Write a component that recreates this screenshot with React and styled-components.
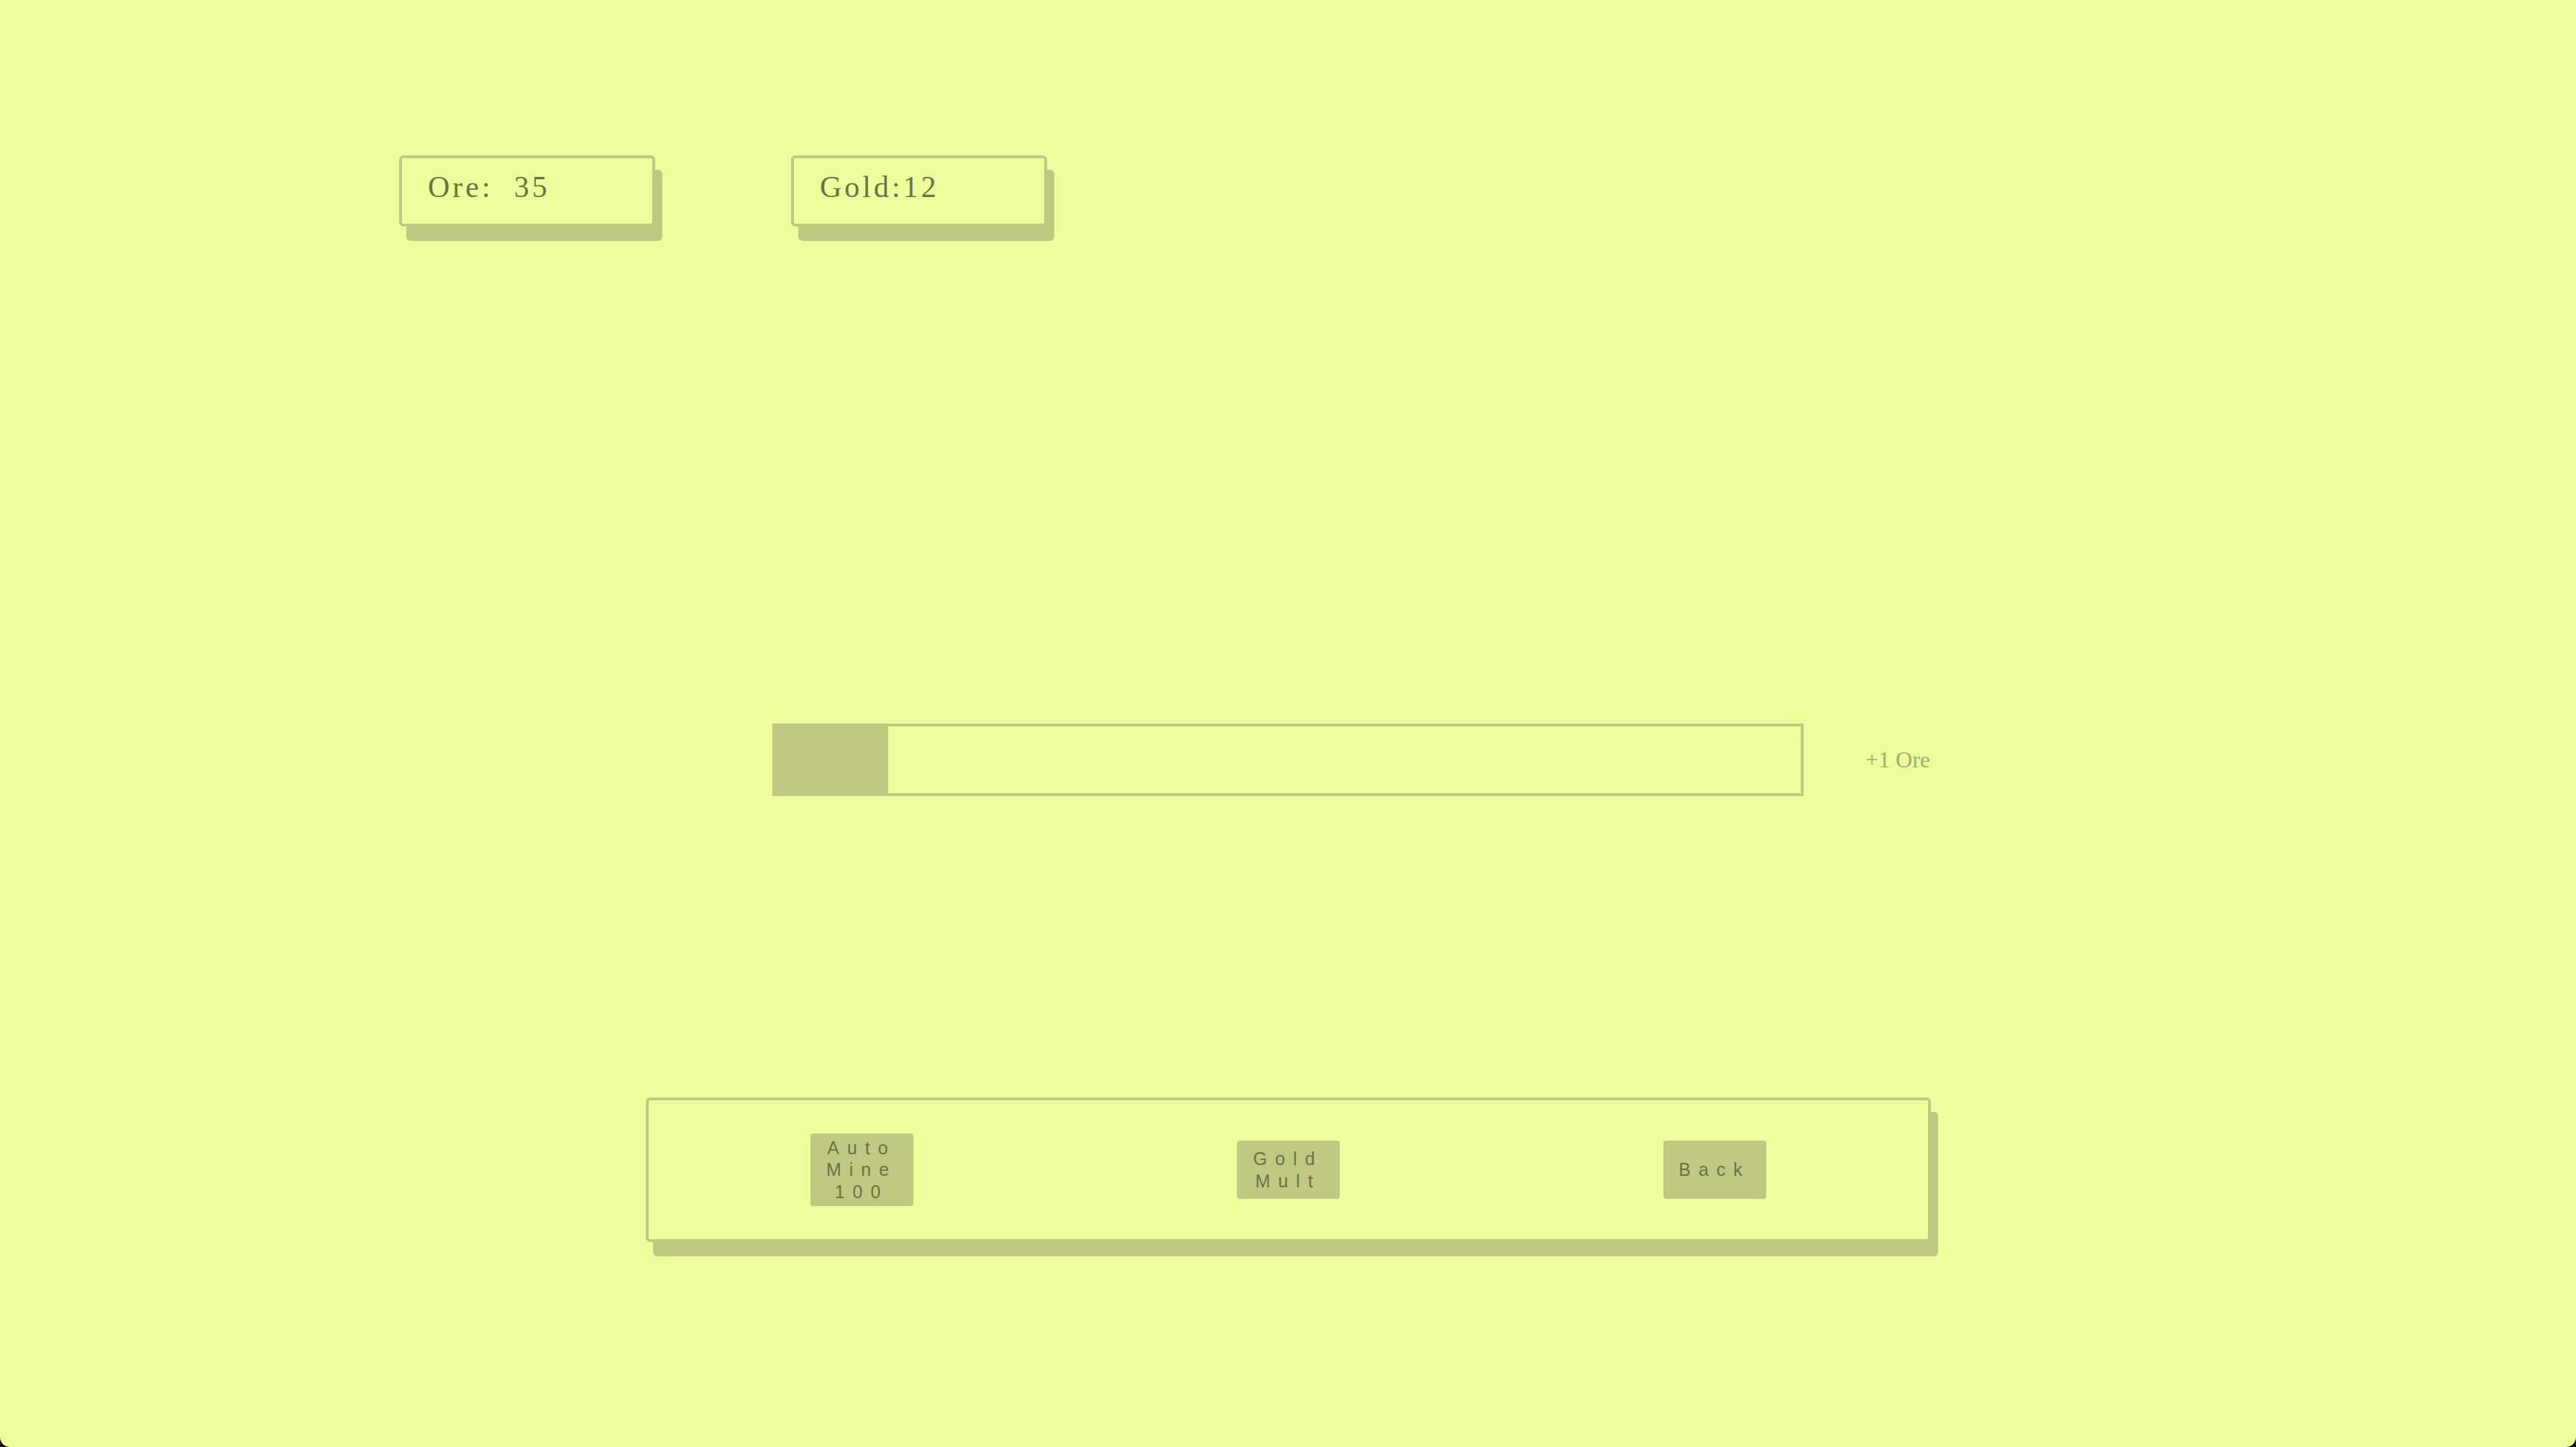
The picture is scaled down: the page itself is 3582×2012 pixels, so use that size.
import React from "react";
import styled, { createGlobalStyle } from "styled-components";

const GlobalStyle = createGlobalStyle`
  html, body {
    margin: 0;
    padding: 0;
    background: #1b0f1b;
  }
  * {
    box-sizing: border-box;
  }
`;

const upgrades = [
  { id: "auto", label: "Auto Mine 100" },
  { id: "mult", label: "Gold Mult" },
  { id: "back", label: "Back" },
];

const App = () => {
  const ore = 35;
  const gold = 12;
  const progress = 0.11;

  return (
    <>
      <GlobalStyle />
      <Screen>
        <StatRow>
          <StatBox>{`Ore:  ${ore}`}</StatBox>
          <StatBox>{`Gold:${gold}`}</StatBox>
        </StatRow>

        <BarRow>
          <span />
          <Bar>
            <Fill style={{ width: `${progress * 100}%` }} />
          </Bar>
          <Gain>+1 Ore</Gain>
        </BarRow>

        <Panel>
          {upgrades.map((u) => (
            <ShopButton key={u.id}>{u.label}</ShopButton>
          ))}
        </Panel>
      </Screen>
    </>
  );
};

const Screen = styled.div`
  min-height: 100vh;
  background: #edfd9c;
  border-radius: 0 0 14px 14px;
  display: flex;
  flex-direction: column;
`;

const StatRow = styled.div`
  display: flex;
  gap: 189px;
  padding: 216px 0 0 555px;
`;

const StatBox = styled.div`
  width: 356px;
  height: 99px;
  border: 4px solid #bfc981;
  border-radius: 6px;
  box-shadow: 10px 20px 0 #bfc981;
  padding: 16px 0 0 36px;
  font-family: "Liberation Serif", "Times New Roman", serif;
  font-size: 42px;
  letter-spacing: 4px;
  white-space: pre;
  color: #6b7244;
`;

const BarRow = styled.div`
  margin-top: 691px;
  display: grid;
  grid-template-columns: 1fr 1434px 1fr;
  align-items: center;
`;

const Bar = styled.div`
  height: 101px;
  border: 4px solid #bfc981;
  display: flex;
`;

const Fill = styled.div`
  height: 100%;
  background: #bfc981;
`;

const Gain = styled.div`
  padding-left: 86px;
  font-family: "Liberation Serif", "Times New Roman", serif;
  font-size: 32px;
  color: #a4ae6d;
`;

const Panel = styled.div`
  margin: 419px auto 0;
  width: 1787px;
  height: 201px;
  border: 4px solid #bfc981;
  border-radius: 6px;
  box-shadow: 10px 20px 0 #bfc981;
  display: flex;
  justify-content: space-around;
  align-items: center;
`;

const ShopButton = styled.button`
  width: 143px;
  min-height: 81px;
  padding: 5px 18px;
  border: none;
  border-radius: 4px;
  background: #bfc981;
  color: #6b7244;
  font-family: "Liberation Sans", Arial, sans-serif;
  font-size: 25px;
  line-height: 30.5px;
  letter-spacing: 11px;
  text-align: center;
  display: flex;
  align-items: center;
  justify-content: center;
`;

export default App;
